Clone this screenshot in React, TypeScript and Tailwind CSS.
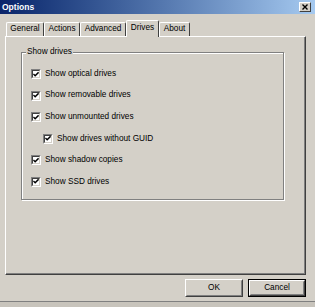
import React from 'react';

const FONT = "font-['Liberation_Sans',Arial,sans-serif]";

// Win2k style sunken checkbox with a tick
function CheckBox({ label, indent }: { label: string; indent?: boolean }) {
  return (
    <div className={`flex items-center h-[10px] ${indent ? 'ml-[12px]' : ''}`}>
      <div className="w-[10px] h-[10px] border border-t-[#808080] border-l-[#808080] border-b-white border-r-white">
        <div className="w-full h-full bg-white border border-t-[#404040] border-l-[#404040] border-b-[#d4d0c8] border-r-[#d4d0c8] flex items-center justify-center">
          <svg width="7" height="7" viewBox="0 0 7 7">
            <path d="M0.5 3 L2.5 5 L6.5 1" stroke="#000" strokeWidth="1.6" fill="none" />
          </svg>
        </div>
      </div>
      <span className="ml-[4px] text-[8.25px] leading-none text-black">{label}</span>
    </div>
  );
}

function Tab({ label, width, active }: { label: string; width: number; active?: boolean }) {
  return (
    <div
      style={{ width }}
      className={`flex items-center justify-center border-l border-t border-r border-l-white border-t-white border-r-[#404040] rounded-t-[2px] bg-[#d4d0c8] text-[8.25px] leading-none text-black ${
        active ? 'h-[17px] -mb-px relative z-10 pb-[2px]' : 'h-[14px]'
      }`}
    >
      {label}
    </div>
  );
}

function Button({ label, isDefault }: { label: string; isDefault?: boolean }) {
  return (
    <div className={`w-[58px] h-[18px] ${isDefault ? 'border border-black' : ''}`}>
      <div className="w-full h-full border border-t-white border-l-white border-b-[#404040] border-r-[#404040]">
        <div className="w-full h-full flex items-center justify-center border border-t-[#d4d0c8] border-l-[#d4d0c8] border-b-[#808080] border-r-[#808080] text-[8.25px] leading-none text-black">
          {label}
        </div>
      </div>
    </div>
  );
}

export default function App() {
  return (
    <div className={`w-[315px] h-[307px] bg-[#d4d0c8] flex flex-col overflow-hidden ${FONT}`}>
      {/* Title bar */}
      <div className="h-[14px] shrink-0 bg-gradient-to-r from-[#0a246a] to-[#a6caf0] flex items-center justify-between pl-[2px] pr-[4px]">
        <span className="text-white font-bold text-[8.5px] leading-none">Options</span>
        <div className="w-[12px] h-[10px] bg-[#d4d0c8] border border-t-white border-l-white border-b-[#404040] border-r-[#404040] flex items-center justify-center">
          <svg width="6" height="6" viewBox="0 0 6 6">
            <path d="M0.5 0.5 L5.5 5.5 M5.5 0.5 L0.5 5.5" stroke="#000" strokeWidth="1.4" />
          </svg>
        </div>
      </div>

      {/* Tabs */}
      <div className="flex items-end ml-[6px] mt-[5px] h-[17px] shrink-0">
        <Tab label="General" width={38} />
        <Tab label="Actions" width={36} />
        <Tab label="Advanced" width={46} />
        <Tab label="Drives" width={33} active />
        <Tab label="About" width={31} />
      </div>

      {/* Tab page */}
      <div className="ml-[5px] w-[301px] h-[239px] shrink-0 border border-t-white border-l-white border-b-[#404040] border-r-[#404040]">
        <div className="w-full h-full border-b border-r border-b-[#808080] border-r-[#808080] pt-[15px] pl-[15px]">
          {/* Group box */}
          <div className="relative w-[263px] h-[148px] border border-[#808080] shadow-[1px_1px_0_#fff,inset_1px_1px_0_#fff]">
            <span className="absolute -top-[5px] left-[4px] px-[1px] bg-[#d4d0c8] text-[8.25px] leading-none text-black">
              Show drives
            </span>
            <div className="flex flex-col gap-[11.6px] pt-[16px] pl-[9px]">
              <CheckBox label="Show optical drives" />
              <CheckBox label="Show removable drives" />
              <CheckBox label="Show unmounted drives" />
              <CheckBox label="Show drives without GUID" indent />
              <CheckBox label="Show shadow copies" />
              <CheckBox label="Show SSD drives" />
            </div>
          </div>
        </div>
      </div>

      {/* Buttons */}
      <div className="flex justify-end gap-[5px] pr-[9px] mt-[4px] shrink-0">
        <Button label="OK" />
        <Button label="Cancel" isDefault />
      </div>

      <div className="mt-auto h-[6px] border-t border-[#808080] bg-[#c8c4bc]" />
    </div>
  );
}
